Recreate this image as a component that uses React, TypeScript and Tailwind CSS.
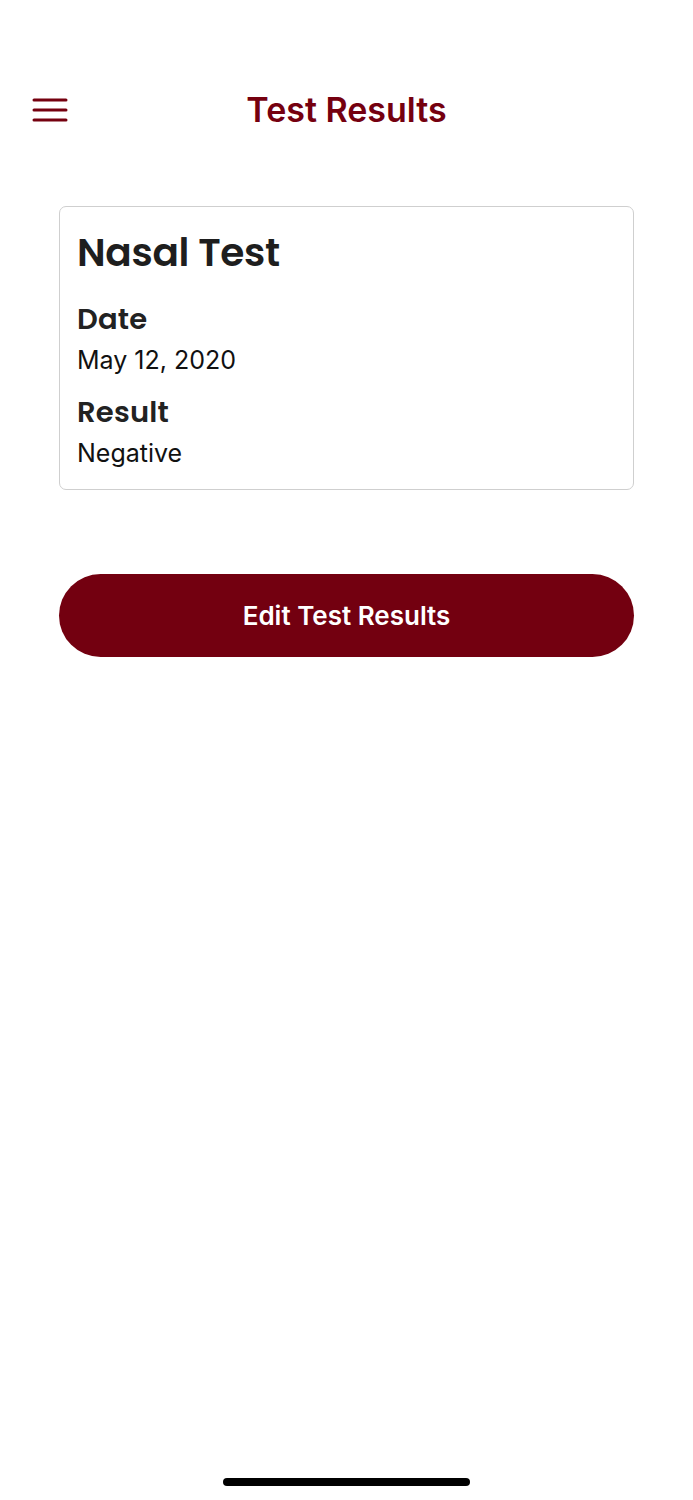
import React from 'react';

const MAROON = 'text-[#75000f]';

const MenuIcon: React.FC = () => (
    <svg width="36" height="26" viewBox="0 0 36 26" fill="none">
        <path d="M2 3h32M2 13h32M2 23h32" stroke="#75000f" strokeWidth="3" strokeLinecap="round" />
    </svg>
);

const Field: React.FC<{ label: string; value: string; spacing: string }> = ({ label, value, spacing }) => (
    <div className={spacing}>
        <div className="font-['Poppins','Inter',sans-serif] font-semibold text-[29px] leading-[42px] text-[#222222] tracking-[0.2px]">{label}</div>
        <div className="font-['Inter',sans-serif] text-[25px] leading-[40px] text-[#111111]">{value}</div>
    </div>
);

const App: React.FC = () => {
    return (
        <div className="min-h-[1500px] bg-white flex flex-col font-['Inter',sans-serif]">
            <header className="pt-[88px] grid grid-cols-[1fr_auto_1fr] items-center h-[132px]">
                <div className="pl-[32px] flex items-center">
                    <MenuIcon />
                </div>
                <h1 className={`text-[34px] leading-[44px] font-semibold ${MAROON}`}>Test Results</h1>
                <div />
            </header>

            <main className="px-[59px] mt-[74px]">
                <div className="border border-[#cfcfcf] rounded-[7px] px-[17px] pt-[21px] pb-[16px]">
                    <h2 className="font-['Poppins','Inter',sans-serif] font-semibold text-[39px] leading-[50px] text-[#1e1e1e] tracking-[-0.3px]">Nasal Test</h2>
                    <Field spacing="mt-[20px]" label="Date" value="May 12, 2020" />
                    <Field spacing="mt-[11px]" label="Result" value="Negative" />
                </div>

                <button className="mt-[84px] w-full h-[83px] rounded-full bg-[#730010] text-white text-[26px] font-semibold">
                    Edit Test Results
                </button>
            </main>

            <div className="mt-auto pb-[14px] flex justify-center">
                <div className="w-[247px] h-[8px] rounded-full bg-black" />
            </div>
        </div>
    );
};

export default App;
